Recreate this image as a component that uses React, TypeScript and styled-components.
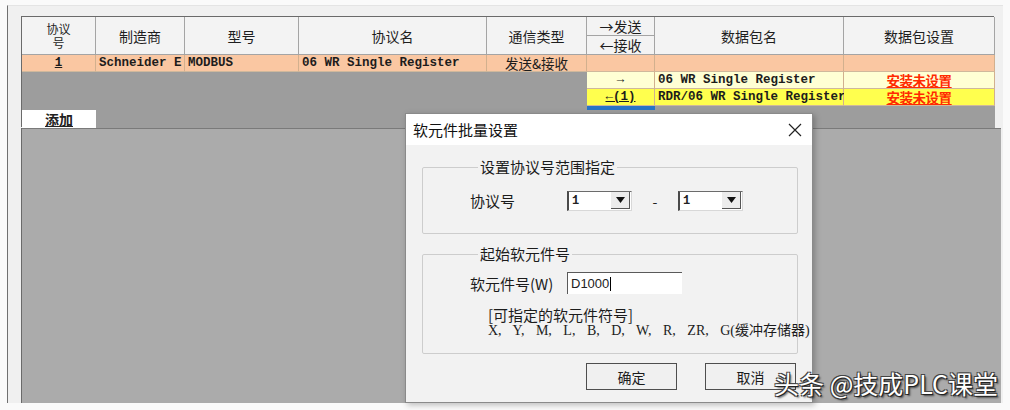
import React from 'react'
import styled, { createGlobalStyle } from 'styled-components'

const GlobalStyle = createGlobalStyle`
  html, body {
    margin: 0;
    padding: 0;
    background: #fafafa;
  }
  body {
    font-family: "Noto Sans CJK SC", "Liberation Sans", sans-serif;
    color: #222;
  }
`

const MONO = `"Liberation Mono", "Noto Sans CJK SC", monospace`

const Screen = styled.div`
  position: relative;
  width: 1010px;
  height: 410px;
  overflow: hidden;
  padding: 5px 0 0 7px;
  box-sizing: border-box;
`

const Frame = styled.div`
  width: 996px;
  height: 398px;
  box-sizing: border-box;
  border-left: 1px solid #707070;
  border-top: 1px solid #e4e4e4;
  background: #f0f0f0;
  padding: 11px 0 0 14px;
  display: flex;
  flex-direction: column;
`

const TablePanel = styled.div`
  width: 973px;
  height: 111px;
  flex: none;
  background: #9d9d9d;
  box-shadow: -1px -1px 0 #6a6a6a;
  display: grid;
  grid-template-columns: 74px 89px 114px 188px 100px 68px 189px 151px;
  grid-template-rows: 19px 19px 17px 17px 17px 4px 18px;
`

const LowerPanel = styled.div`
  width: 979px;
  flex: 1;
  background: #ababab;
  border-top: 1px solid #7a7a7a;
  box-shadow: -1px 0 0 #6a6a6a;
`

interface Place {
  $col: number
  $row: number
  $span?: number
}

const HeadCell = styled.div<Place & { $small?: boolean }>`
  grid-column: ${p => p.$col};
  grid-row: ${p => p.$row} / span ${p => p.$span ?? 1};
  background: #f3f3f3;
  border-right: 1px solid #a4a4a4;
  border-bottom: 1px solid #a4a4a4;
  display: flex;
  flex-direction: column;
  align-items: center;
  justify-content: center;
  font-size: ${p => (p.$small ? '12px' : '14px')};
  line-height: ${p => (p.$small ? '14px' : '14px')};
  color: #1e1e1e;
`

const DataCell = styled.div<Place & { $bg: string; $center?: boolean }>`
  grid-column: ${p => p.$col};
  grid-row: ${p => p.$row};
  background: ${p => p.$bg};
  border-right: 1px solid #d2b08e;
  border-bottom: 1px solid #cfb89c;
  display: flex;
  align-items: center;
  justify-content: ${p => (p.$center ? 'center' : 'flex-start')};
  padding-left: ${p => (p.$center ? '0' : '3px')};
  font-family: ${MONO};
  font-size: 12.5px;
  line-height: 14px;
  font-weight: bold;
  color: #1c1c1c;
  white-space: nowrap;
`

const CjkText = styled.span`
  font-family: "Noto Sans CJK SC", sans-serif;
  font-size: 13.5px;
  line-height: 14px;
  font-weight: normal;
`

const Unset = styled.span`
  font-family: "Noto Sans CJK SC", sans-serif;
  font-size: 13.5px;
  line-height: 14px;
  font-weight: bold;
  color: #ff2a00;
  text-decoration: underline;
  letter-spacing: -0.5px;
`

const Under = styled.span`
  text-decoration: underline;
`

const BlueBar = styled.div<Place>`
  grid-column: ${p => p.$col};
  grid-row: ${p => p.$row};
  background: #2874c6;
`

const AddButton = styled.div<Place>`
  grid-column: ${p => p.$col};
  grid-row: ${p => p.$row};
  background: #ffffff;
  display: flex;
  align-items: center;
  justify-content: center;
  font-size: 14px;
  line-height: 14px;
  text-decoration: underline;
  font-weight: bold;
  color: #222;
`

// Dialog
const Dialog = styled.div`
  position: absolute;
  left: 405px;
  top: 113px;
  width: 408px;
  height: 290px;
  box-sizing: border-box;
  border: 1px solid #8a8a8a;
  background: #f2f2f2;
  box-shadow: 2px 2px 6px rgba(0, 0, 0, 0.25);
  display: flex;
  flex-direction: column;
`

const TitleBar = styled.div`
  height: 31px;
  flex: none;
  background: #ffffff;
  display: flex;
  align-items: center;
  justify-content: space-between;
  padding: 0 10px 0 7px;
  font-size: 15px;
  color: #111;
`

const DialogBody = styled.div`
  padding: 14px 14px 0 16px;
  display: flex;
  flex-direction: column;
`

const Group = styled.fieldset<{ $pad: string }>`
  margin: 0;
  min-width: 0;
  border: 1px solid #cdcdcd;
  border-radius: 2px;
  padding: ${p => p.$pad};
  & + & {
    margin-top: 12px;
  }
`

const Legend = styled.legend`
  font-size: 15px;
  line-height: 16px;
  padding: 0 2px;
  margin-left: 8px;
  color: #1c1c1c;
`

const FieldRow = styled.div`
  display: flex;
  align-items: center;
`

const FieldLabel = styled.span`
  width: 97px;
  font-size: 15px;
  color: #1c1c1c;
`

const Combo = styled.div`
  width: 65px;
  height: 20px;
  box-sizing: border-box;
  background: #fff;
  border-top: 1px solid #6b6b6b;
  border-left: 2px solid #4a4a4a;
  border-right: 1px solid #d8d8d8;
  border-bottom: 1px solid #d8d8d8;
  display: flex;
  align-items: center;
  justify-content: space-between;
  font-family: ${MONO};
  font-size: 12px;
  font-weight: bold;
  padding-left: 3px;
`

const ComboButton = styled.div`
  width: 18px;
  height: 16px;
  margin-right: 1px;
  background: #ececec;
  border-right: 1px solid #555;
  border-bottom: 1px solid #555;
  display: flex;
  align-items: center;
  justify-content: center;
`

const Dash = styled.span`
  width: 46px;
  text-align: center;
  font-size: 14px;
`

const TextBox = styled.div`
  width: 115px;
  height: 22px;
  box-sizing: border-box;
  background: #fff;
  border-top: 1px solid #5a5a5a;
  border-left: 1px solid #5a5a5a;
  display: flex;
  align-items: center;
  padding-left: 3px;
  font-family: "Liberation Sans", sans-serif;
  font-size: 13px;
`

const Caret = styled.span`
  width: 1px;
  height: 14px;
  background: #000;
  margin-left: 1px;
`

const Note = styled.div`
  margin: 12px 0 0 18px;
`

const NoteTitle = styled.div`
  font-size: 15px;
  line-height: 17px;
  color: #1c1c1c;
`

const NoteList = styled.div`
  font-family: "Liberation Serif", "Noto Sans CJK SC", serif;
  font-size: 14px;
  line-height: 16px;
  word-spacing: 8px;
  white-space: nowrap;
  color: #1c1c1c;
`

const ButtonRow = styled.div`
  display: flex;
  justify-content: flex-end;
  gap: 28px;
  padding-right: 2px;
  margin-top: 9px;
`

const DlgButton = styled.div`
  width: 91px;
  height: 27px;
  box-sizing: border-box;
  border: 1px solid #4e4e4e;
  background: #f0f0f0;
  display: flex;
  align-items: center;
  justify-content: center;
  font-size: 14px;
  color: #1c1c1c;
`

const Watermark = styled.div`
  position: absolute;
  right: 12px;
  bottom: 12px;
  font-size: 25px;
  line-height: 30px;
  color: #ffffff;
  white-space: nowrap;
  text-shadow: 1px 1px 0 #222, -1px -1px 0 #444, 1px -1px 0 #444, -1px 1px 0 #444, 2px 2px 2px rgba(0,0,0,0.6);
`

const ArrowDown = () => (
  <svg width="9" height="6" viewBox="0 0 9 6">
    <path d="M0 0h9L4.5 6z" fill="#111" />
  </svg>
)

const CloseIcon = () => (
  <svg width="14" height="14" viewBox="0 0 14 14">
    <path d="M1 1l12 12M13 1L1 13" stroke="#222" strokeWidth="1.2" fill="none" />
  </svg>
)

const ORANGE = '#fac7a2'
const PALE = '#ffffd4'
const YELLOW = '#ffff4e'

const App = () => {
  return (
    <Screen>
      <GlobalStyle />
      <Frame>
        <TablePanel>
          <HeadCell $col={1} $row={1} $span={2} $small>
            <span>协议</span>
            <span>号</span>
          </HeadCell>
          <HeadCell $col={2} $row={1} $span={2}>制造商</HeadCell>
          <HeadCell $col={3} $row={1} $span={2}>型号</HeadCell>
          <HeadCell $col={4} $row={1} $span={2}>协议名</HeadCell>
          <HeadCell $col={5} $row={1} $span={2}>通信类型</HeadCell>
          <HeadCell $col={6} $row={1}>→发送</HeadCell>
          <HeadCell $col={6} $row={2}>←接收</HeadCell>
          <HeadCell $col={7} $row={1} $span={2}>数据包名</HeadCell>
          <HeadCell $col={8} $row={1} $span={2}>数据包设置</HeadCell>

          <DataCell $col={1} $row={3} $bg={ORANGE} $center><Under>1</Under></DataCell>
          <DataCell $col={2} $row={3} $bg={ORANGE}>Schneider E</DataCell>
          <DataCell $col={3} $row={3} $bg={ORANGE}>MODBUS</DataCell>
          <DataCell $col={4} $row={3} $bg={ORANGE}>06 WR Single Register</DataCell>
          <DataCell $col={5} $row={3} $bg={ORANGE} $center><CjkText>发送&amp;接收</CjkText></DataCell>
          <DataCell $col={6} $row={3} $bg={ORANGE} />
          <DataCell $col={7} $row={3} $bg={ORANGE} />
          <DataCell $col={8} $row={3} $bg={ORANGE} />

          <DataCell $col={6} $row={4} $bg={PALE} $center>→</DataCell>
          <DataCell $col={7} $row={4} $bg={PALE}>06 WR Single Register</DataCell>
          <DataCell $col={8} $row={4} $bg={PALE} $center><Unset>安装未设置</Unset></DataCell>

          <DataCell $col={6} $row={5} $bg={YELLOW} $center><Under>←(1)</Under></DataCell>
          <DataCell $col={7} $row={5} $bg={YELLOW}>RDR/06 WR Single Register</DataCell>
          <DataCell $col={8} $row={5} $bg={YELLOW} $center><Unset>安装未设置</Unset></DataCell>

          <BlueBar $col={6} $row={6} />
          <AddButton $col={1} $row={7}>添加</AddButton>
        </TablePanel>
        <LowerPanel />
      </Frame>

      <Dialog>
        <TitleBar>
          <span>软元件批量设置</span>
          <CloseIcon />
        </TitleBar>
        <DialogBody>
          <Group $pad="15px 0 22px 47px">
            <Legend>设置协议号范围指定</Legend>
            <FieldRow>
              <FieldLabel>协议号</FieldLabel>
              <Combo>
                1
                <ComboButton><ArrowDown /></ComboButton>
              </Combo>
              <Dash>-</Dash>
              <Combo>
                1
                <ComboButton><ArrowDown /></ComboButton>
              </Combo>
            </FieldRow>
          </Group>
          <Group $pad="10px 0 14px 47px">
            <Legend>起始软元件号</Legend>
            <FieldRow>
              <FieldLabel>软元件号(W)</FieldLabel>
              <TextBox>
                D1000
                <Caret />
              </TextBox>
            </FieldRow>
            <Note>
              <NoteTitle>[可指定的软元件符号]</NoteTitle>
              <NoteList>X, Y, M, L, B, D, W, R, ZR, G(缓冲存储器)</NoteList>
            </Note>
          </Group>
          <ButtonRow>
            <DlgButton>确定</DlgButton>
            <DlgButton>取消</DlgButton>
          </ButtonRow>
        </DialogBody>
      </Dialog>

      <Watermark>头条 @技成PLC课堂</Watermark>
    </Screen>
  )
}

export default App
